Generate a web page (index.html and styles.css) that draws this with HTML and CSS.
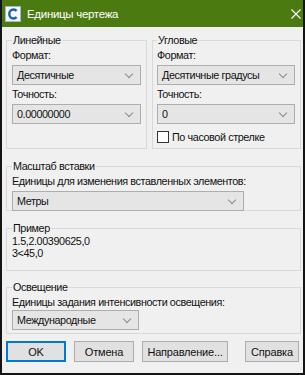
FILE: index.html
```html
<!DOCTYPE html>
<html lang="ru">
<head>
  <meta charset="UTF-8" />
  <meta name="viewport" content="width=device-width, initial-scale=1.0"/>
  <title>Единицы чертежа</title>
  <link rel="stylesheet" href="styles.css">
</head>
<body>
  <div class="window">
    <div class="titlebar">
      <div class="app-icon">
        <svg width="16" height="16" viewBox="0 0 16 16">
          <rect x="0.5" y="0.5" width="15" height="15" fill="#f4f8fc" stroke="#9fb8d4"/>
          <path d="M11.5 5 C10.8 4 9.8 3.5 8.5 3.5 C6 3.5 4.3 5.4 4.3 8 C4.3 10.6 6 12.5 8.5 12.5 C9.8 12.5 10.8 12 11.5 11" fill="none" stroke="#1f5fa8" stroke-width="2.4"/>
        </svg>
      </div>
      <span class="title">Единицы чертежа</span>
      <span class="close">
        <svg width="10" height="10" viewBox="0 0 10 10">
          <path d="M0.5 0.5 L9.5 9.5 M9.5 0.5 L0.5 9.5" stroke="#fff" stroke-width="1.1"/>
        </svg>
      </span>
    </div>

    <div class="content">
      <div class="row">
        <fieldset class="group linear">
          <legend>Линейные</legend>
          <div class="label">Формат:</div>
          <div class="select">Десятичные</div>
          <div class="label">Точность:</div>
          <div class="select">0.00000000</div>
        </fieldset>
        <fieldset class="group angular">
          <legend>Угловые</legend>
          <div class="label">Формат:</div>
          <div class="select">Десятичные градусы</div>
          <div class="label">Точность:</div>
          <div class="select">0</div>
          <label class="check"><span class="box"></span>По часовой стрелке</label>
        </fieldset>
      </div>

      <fieldset class="group scale">
        <legend>Масштаб вставки</legend>
        <div class="label">Единицы для изменения вставленных элементов:</div>
        <div class="select wide">Метры</div>
      </fieldset>

      <fieldset class="group sample">
        <legend>Пример</legend>
        <div class="line">1.5,2.00390625,0</div>
        <div class="line">3&lt;45,0</div>
      </fieldset>

      <fieldset class="group lighting">
        <legend>Освещение</legend>
        <div class="label">Единицы задания интенсивности освещения:</div>
        <div class="select short">Международные</div>
      </fieldset>

      <div class="buttons">
        <button class="default">OK</button>
        <button>Отмена</button>
        <button class="direction">Направление...</button>
        <button class="help">Справка</button>
      </div>
    </div>
  </div>
</body>
</html>
```

FILE: styles.css
```css
body {
  margin: 0;
  background: #141414;
  font-family: 'Liberation Sans', Arial, sans-serif;
  font-size: 10.8px;
  letter-spacing: -0.4px;
  color: #111;
}

.window {
  width: 301px;
  height: 373px;
  margin-left: 2px;
  background: #f0f0f0;
  overflow: hidden;
}

.titlebar {
  height: 27px;
  background: #4b7b10;
  display: flex;
  align-items: center;
  color: #fff;
}

.app-icon {
  width: 16px;
  height: 16px;
  margin-left: 3px;
  margin-right: 6px;
}

.title {
  flex: 1;
  font-size: 11.5px;
  letter-spacing: -0.3px;
}

.close {
  width: 10px;
  height: 10px;
  margin-right: 2px;
  display: flex;
}

.content {
  padding: 6px 2px 0 4px;
}

.row {
  display: flex;
  gap: 5px;
}

.group {
  margin: 0;
  padding: 0 5px 0 5px;
  border: 1px solid #d9d9d9;
  min-width: 0;
  box-sizing: border-box;
}

.group legend {
  padding: 0 1px;
  margin-left: 0;
  line-height: 14px;
}

.linear {
  width: 141px;
  height: 116px;
}

.angular {
  width: 149px;
  height: 116px;
  padding-left: 4px;
}

.label {
  line-height: 14px;
  margin: 1px 0 3px;
}

.select {
  height: 20px;
  box-sizing: border-box;
  background: #e5e5e5;
  border: 1px solid #adadad;
  padding: 0 4px;
  line-height: 18px;
  position: relative;
  margin-bottom: 2px;
}

.select::after {
  content: "";
  position: absolute;
  right: 8px;
  top: 5px;
  width: 5px;
  height: 5px;
  border-right: 1px solid #8a8a8a;
  border-bottom: 1px solid #8a8a8a;
  transform: rotate(45deg);
}

.select + .label {
  margin-top: 0;
}

.wide {
  width: 232px;
}

.short {
  width: 127px;
}

.check {
  display: flex;
  align-items: center;
  margin-top: 7px;
}

.check .box {
  width: 10px;
  height: 10px;
  border: 1px solid #333;
  background: #fff;
  margin-right: 3px;
  margin-left: 0;
}

.scale {
  margin-top: 10px;
  height: 52px;
}

.sample {
  margin-top: 10px;
  height: 50px;
}

.sample .line {
  line-height: 12px;
}

.lighting {
  margin-top: 9px;
  height: 54px;
}

.lighting .label {
  margin: 1px 0 1px;
}

.buttons {
  display: flex;
  margin-top: 7px;
}

button {
  font-family: 'Liberation Sans', Arial, sans-serif;
  font-size: 11px;
  letter-spacing: -0.2px;
  color: #111;
  height: 21px;
  background: #e1e1e1;
  border: 1px solid #adadad;
  padding: 0;
  margin-right: 8px;
  width: 60px;
}

button.default {
  border: 2px solid #0078d7;
}

button.direction {
  width: 86px;
  margin-right: 17px;
}

button.help {
  width: 54px;
  margin-right: 0;
}
```
